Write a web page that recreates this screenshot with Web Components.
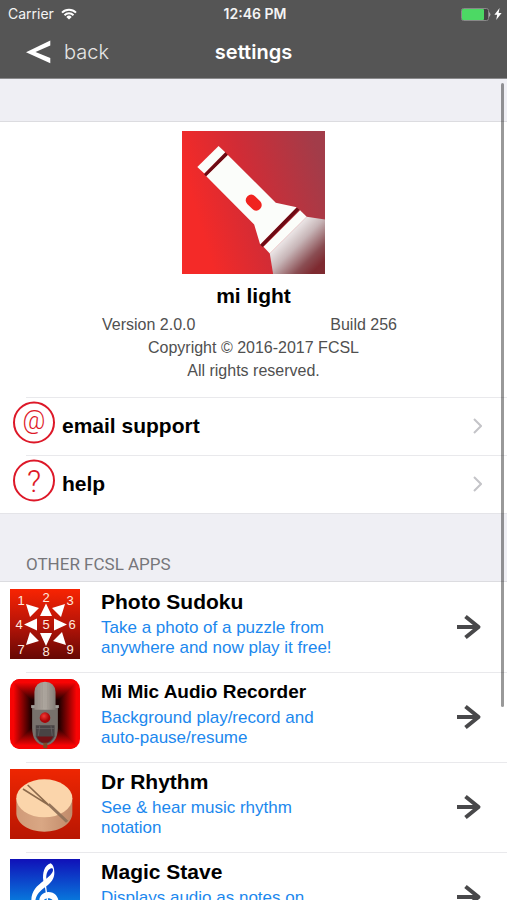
<!DOCTYPE html>
<html lang="en">
<head>
<meta charset="utf-8">
<meta name="viewport" content="width=device-width, initial-scale=1">
<title>settings</title>
<style>
    body {
        margin: 0;
        font-family: "Liberation Sans", Arial, sans-serif;
        --bar: #555555;
        --group: #efeff4;
        --line: #e9e9ec;
        --link: #1c88ee;
        --red: #dd1828;
    }
</style>
</head>
<body>

<settings-screen>
    <status-bar slot="top" carrier="Carrier" time="12:46 PM"></status-bar>
    <nav-bar slot="top" back="back">settings</nav-bar>

    <list-group>
        <about-card name="mi light" version="Version 2.0.0" build="Build 256">
            <app-art slot="art" kind="torch"></app-art>
            <div>Copyright © 2016-2017 FCSL</div>
            <div>All rights reserved.</div>
        </about-card>
        <link-row glyph="@">email support</link-row>
        <link-row glyph="?">help</link-row>
    </list-group>

    <list-group heading="OTHER FCSL APPS">
        <app-row name="Photo Sudoku">
            <app-art slot="art" kind="sudoku"></app-art>
            Take a photo of a puzzle from anywhere and now play it free!
        </app-row>
        <app-row name="Mi Mic Audio Recorder" long>
            <app-art slot="art" kind="mic"></app-art>
            Background play/record and auto-pause/resume
        </app-row>
        <app-row name="Dr Rhythm">
            <app-art slot="art" kind="drum"></app-art>
            See &amp; hear music rhythm notation
        </app-row>
        <app-row name="Magic Stave">
            <app-art slot="art" kind="clef"></app-art>
            Displays audio as notes on
        </app-row>
    </list-group>
</settings-screen>

<!-- Whole screen: bars on top, scrolling list below with an overlay scroll indicator -->
<template id="settings-screen-template">
    <style>
        :host {
            display: flex;
            flex-direction: column;
            height: 100vh;
            background: #fff;
        }
        .body {
            position: relative;
            flex: 1;
            min-height: 0;
        }
        main {
            height: 100%;
            overflow-y: auto;
            scrollbar-width: none;
        }
        .indicator {
            position: absolute;
            top: 4px;
            right: 3px;
            width: 3px;
            height: 76%;
            border-radius: 2px;
            background: rgba(0, 0, 0, 0.4);
        }
    </style>
    <header><slot name="top"></slot></header>
    <div class="body">
        <main><slot></slot></main>
        <div class="indicator"></div>
    </div>
</template>

<template id="status-bar-template">
    <style>
        :host {
            display: grid;
            grid-template-columns: 1fr auto 1fr;
            align-items: center;
            height: 28px;
            padding: 0 5px 0 8px;
            background: var(--bar);
            color: #f4f4f4;
            font: 14px/20px Inter, sans-serif;
        }
        .side {
            display: flex;
            align-items: center;
            gap: 7px;
        }
        .right {
            justify-content: flex-end;
            gap: 3px;
        }
        .time {
            font-weight: 600;
        }
        svg {
            display: block;
        }
    </style>
    <div class="side">
        <span class="carrier"></span>
        <svg width="16" height="12" viewBox="0 0 16 12" fill="none" stroke="#fff" stroke-width="2">
            <path d="M1 4.6a10 10 0 0 1 14 0M3.5 7.2a6.4 6.4 0 0 1 9 0"/>
            <path d="M8 11.6L5.3 8.9a3.8 3.8 0 0 1 5.4 0z" fill="#fff" stroke="none"/>
        </svg>
    </div>
    <span class="time"></span>
    <div class="side right">
        <svg width="30" height="13" viewBox="0 0 30 13">
            <rect x="0.5" y="0.5" width="27" height="12" rx="2" fill="#444" stroke="#888"/>
            <rect x="1" y="1" width="22" height="11" rx="1" fill="#4cd964"/>
            <path d="M28.4 4q1.8 2.500 0 5z" fill="#ddd"/>
        </svg>
        <svg width="8" height="12" viewBox="0 0 8 12" fill="#fff">
            <path d="M5.6 0L0.4 6.8h2.8L2.2 12l5.4-7H4.6z"/>
        </svg>
    </div>
</template>

<template id="nav-bar-template">
    <style>
        :host {
            display: grid;
            grid-template-columns: 1fr auto 1fr;
            align-items: center;
            height: 48px;
            padding: 0 26px 2px;
            background: var(--bar);
            border-bottom: 1px solid #8a8a8c;
            color: #fff;
            font-family: Inter, sans-serif;
        }
        button {
            display: flex;
            align-items: center;
            gap: 13px;
            padding: 0;
            border: 0;
            background: none;
            color: #e6e6e6;
            font: 300 20px/24px Inter, sans-serif;
        }
        h1 {
            margin: 0;
            font-size: 20px;
            line-height: 24px;
            font-weight: 600;
        }
    </style>
    <button type="button">
        <svg width="25" height="24" viewBox="0 0 25 24" fill="#fff">
            <path d="M24.3 0.500v5L9.500 12l14.8 6v5.2L0 12.2z"/>
        </svg>
        <span class="back"></span>
    </button>
    <h1><slot></slot></h1>
</template>

<template id="list-group-template">
    <style>
        :host {
            display: block;
            background: #fff;
        }
        h2 {
            display: flex;
            align-items: flex-end;
            box-sizing: border-box;
            height: 69px;
            margin: 0;
            padding: 0 26px 7px;
            background: var(--group);
            border-top: 1px solid #e4e4e8;
            border-bottom: 1px solid #dcdce0;
            color: #76767a;
            font: 400 17px/20px Roboto, sans-serif;
        }
        h2:empty {
            height: 43px;
            border-top: 0;
        }
    </style>
    <h2></h2>
    <slot></slot>
</template>

<template id="about-card-template">
    <style>
        :host {
            display: flex;
            flex-direction: column;
            align-items: center;
            padding: 9px 0 15px;
            color: #505050;
            font-size: 16px;
            line-height: 23px;
            text-align: center;
        }
        ::slotted(app-art) {
            width: 143px;
            height: 143px;
        }
        h2 {
            margin: 10px 0 5px;
            color: #000;
            font-size: 21px;
            line-height: 24px;
        }
        .release {
            display: flex;
            justify-content: space-between;
            align-self: stretch;
            padding: 0 110px 0 102px;
        }
    </style>
    <slot name="art"></slot>
    <h2></h2>
    <div class="release">
        <span class="version"></span>
        <span class="build"></span>
    </div>
    <slot></slot>
</template>

<template id="link-row-template">
    <style>
        :host {
            display: block;
        }
        a {
            display: flex;
            align-items: center;
            height: 58px;
            padding: 0 25px 0 13px;
            background: linear-gradient(var(--line), var(--line)) 26px 0 / 100% 1px no-repeat;
            color: #000;
            font-size: 21px;
            line-height: 24px;
            font-weight: bold;
            text-decoration: none;
        }
        .badge {
            align-self: flex-start;
            margin: 4px 7px 0 0;
        }
        .badge text {
            fill: var(--red);
            font-family: Roboto, sans-serif;
            font-weight: 300;
            text-anchor: middle;
        }
        .label {
            flex: 1;
        }
    </style>
    <a href="#">
        <svg class="badge" width="42" height="43" viewBox="0 0 42 43">
            <circle cx="21" cy="21.5" r="20" fill="none" stroke="#dd1828" stroke-width="2"/>
            <text x="21" y="30"></text>
        </svg>
        <span class="label"><slot></slot></span>
        <svg width="9" height="16" viewBox="0 0 9 16" fill="none" stroke="#c4c4c8" stroke-width="2">
            <path d="M1 1l7 7-7 7"/>
        </svg>
    </a>
</template>

<template id="app-row-template">
    <style>
        :host {
            display: block;
            --title: 21px;
        }
        :host([long]) {
            --title: 19px;
        }
        a {
            display: flex;
            box-sizing: border-box;
            min-height: 90px;
            padding: 7px 25px 7px 10px;
            color: var(--link);
            font-size: 17px;
            line-height: 20px;
            text-decoration: none;
        }
        :host(:not(:first-of-type)) a {
            background: linear-gradient(var(--line), var(--line)) 26px 0 / 100% 1px no-repeat;
        }
        ::slotted(app-art) {
            flex: none;
            width: 70px;
            height: 70px;
        }
        .text {
            flex: 1;
            padding: 1px 0 0 21px;
        }
        h3 {
            margin: 0 0 4px;
            color: #000;
            font-size: var(--title);
            line-height: 24px;
        }
        p {
            max-width: 240px;
            margin: 0;
        }
        .arrow {
            flex: none;
            align-self: center;
        }
    </style>
    <a href="#">
        <slot name="art"></slot>
        <div class="text">
            <h3></h3>
            <p><slot></slot></p>
        </div>
        <svg class="arrow" width="26" height="26" viewBox="0 0 26 26" fill="none" stroke="#48484a" stroke-width="4" stroke-linejoin="round">
            <path d="M1 13H22M9.500 2.500L22.500 13l-13 10.500"/>
        </svg>
    </a>
</template>

<template id="art-torch">
    <svg viewBox="36 34 430 430">
        <defs>
            <linearGradient id="bg" x1="0" y1="0.6" x2="1" y2="0.3">
                <stop offset="0.1" stop-color="#f42a28"/>
                <stop offset="0.5" stop-color="#d02c36"/>
                <stop offset="1" stop-color="#a23c49"/>
            </linearGradient>
            <linearGradient id="beam" gradientUnits="userSpaceOnUse" x1="350" y1="342" x2="448" y2="440">
                <stop offset="0" stop-color="#f2efef"/>
                <stop offset="0.35" stop-color="#c7b5b7"/>
                <stop offset="0.75" stop-color="#8a4d52"/>
                <stop offset="1" stop-color="#7e2a30"/>
            </linearGradient>
        </defs>
        <path fill="url(#bg)" d="M36 34h430v430H36z"/>
        <path fill="url(#beam)" d="M411 292l55 8v164H310l-10-62z"/>
        <path fill="#6d0b14" d="M166 98l8 8-65 65-7-8zM380 263l9 8-110 112-8-7z"/>
        <g fill="#fbfdfa">
            <path d="M146 79l20 19-63 64-21-20z"/>
            <path d="M174 106l144 144 63 13-110 112-18-60-144-145z"/>
            <path d="M391 272l20 20-111 110-19-20z"/>
        </g>
        <rect x="225" y="233" width="54" height="33" rx="16" fill="#f0231f" transform="rotate(45 252 249)"/>
    </svg>
</template>

<template id="art-sudoku">
    <svg viewBox="0 0 70 70">
        <defs>
            <linearGradient id="bg" x1="0" y1="0" x2="0" y2="1">
                <stop offset="0" stop-color="#f82402"/>
                <stop offset="0.5" stop-color="#b81408"/>
                <stop offset="1" stop-color="#660804"/>
            </linearGradient>
        </defs>
        <path fill="url(#bg)" d="M0 0h70v70H0z"/>
        <g fill="#fff">
            <path d="M36 14.500l6 12.500H30zM36 57l-6-13h12z"/>
            <path d="M14 35.500l13-6v12zM57 35.500l-13-6v12z"/>
            <path d="M16 15l13 4-9 9zM55 15l-13 4 9 9zM16 56l4-13 9 9zM56 56l-13-4 9-9z"/>
        </g>
        <g class="digits">
            <text x="11" y="16">1</text><text x="36" y="13">2</text><text x="60" y="16">3</text>
            <text x="9" y="40">4</text><text x="36" y="40">5</text><text x="62" y="40">6</text>
            <text x="11" y="65">7</text><text x="36" y="67">8</text><text x="60" y="65">9</text>
        </g>
    </svg>
</template>

<template id="art-mic">
    <svg viewBox="27 27 212 212">
        <defs>
            <linearGradient id="side" x1="0" y1="0" x2="1" y2="0">
                <stop offset="0.05" stop-color="#f80404"/>
                <stop offset="0.3" stop-color="#200000"/>
                <stop offset="0.7" stop-color="#200000"/>
                <stop offset="0.95" stop-color="#f80404"/>
            </linearGradient>
            <linearGradient id="top" gradientUnits="userSpaceOnUse" x1="0" y1="27" x2="0" y2="239">
                <stop offset="0.05" stop-color="#f80404"/>
                <stop offset="0.3" stop-color="#200000"/>
                <stop offset="0.7" stop-color="#200000"/>
                <stop offset="0.95" stop-color="#f80404"/>
            </linearGradient>
            <linearGradient id="metal" x1="0" y1="0" x2="1" y2="0">
                <stop offset="0" stop-color="#938b84"/>
                <stop offset="0.5" stop-color="#b0a9a1"/>
                <stop offset="1" stop-color="#827b75"/>
            </linearGradient>
            <radialGradient id="knob" cx="0.4" cy="0.35">
                <stop offset="0" stop-color="#f43a34"/>
                <stop offset="1" stop-color="#a90406"/>
            </radialGradient>
            <clipPath id="round"><rect x="27" y="27" width="212" height="212" rx="30"/></clipPath>
        </defs>
        <g clip-path="url(#round)">
            <path fill="url(#side)" d="M27 27h212v212H27z"/>
            <path fill="url(#top)" d="M27 27h212L133 133zM27 239h212L133 133z"/>
        </g>
        <path fill="#a09c97" d="M91 106h84v9H91z"/>
        <path fill="#77716c" d="M94 115h78v59q0 50-39 55-39-5-39-55z"/>
        <path fill="url(#metal)" d="M101 120V66q2-30 32-31 30 1 32 31v54z"/>
        <path stroke="#968f88" stroke-width="1" d="M109 54v62M117 44v72M125 39v77M133 38v78M141 39v77M149 44v72M157 54v62"/>
        <path fill="#484344" d="M105 167h57v34q-9 20-29 22-20-2-28-22z"/>
        <path stroke="#6c6868" stroke-width="2" fill="none" d="M107 177h54M117 169l-4 30M151 169l4 30"/>
        <path fill="#711014" d="M108 201h50q-9 19-25 20-18-1-25-20z"/>
        <circle cx="133" cy="144" r="16" fill="url(#knob)"/>
        <path fill="#7c4926" d="M128 220h12v17h-12z"/>
    </svg>
</template>

<template id="art-drum">
    <svg viewBox="29 29 210 210">
        <defs>
            <linearGradient id="bg" x1="0" y1="0" x2="0" y2="1">
                <stop offset="0" stop-color="#ee2602"/>
                <stop offset="1" stop-color="#b81602"/>
            </linearGradient>
            <linearGradient id="shell" x1="0" y1="0" x2="1" y2="0">
                <stop offset="0" stop-color="#d09a78"/>
                <stop offset="0.45" stop-color="#d9a784"/>
                <stop offset="1" stop-color="#c08a6a"/>
            </linearGradient>
        </defs>
        <path fill="url(#bg)" d="M29 29h210v210H29z"/>
        <path fill="url(#shell)" d="M48 116v45c0 31 37 56 84 56s84-25 84-56v-45z"/>
        <ellipse cx="132" cy="117" rx="84" ry="57" fill="#fbd5ab"/>
        <path fill="none" stroke="#8c6a4c" stroke-width="5" d="M82 77l64 61M68 89l78 49"/>
        <path fill="#94745b" d="M141 137l7-5 56 52-7 6z"/>
    </svg>
</template>

<template id="art-clef">
    <svg viewBox="29 301 210 210">
        <defs>
            <linearGradient id="bg" x1="0" y1="0" x2="0" y2="1">
                <stop offset="0" stop-color="#1010b8"/>
                <stop offset="0.6" stop-color="#0878dc"/>
                <stop offset="1" stop-color="#10a8ee"/>
            </linearGradient>
        </defs>
        <path fill="url(#bg)" d="M29 301h210v210H29z"/>
        <path fill="#fff" d="M151 314c8 4 11 17 11 28 0 18-10 30-24 41-16 12-33 25-33 47 0 18 13 29 31 29 15 0 26-9 26-21 0-11-8-19-19-19-10 0-16 7-16 15 0 5 3 10 6 13-10-3-16-10-16-21 0-15 12-26 27-26 19 0 31 14 31 32 0 22-17 36-40 36-25 0-42-18-42-43 0-29 18-44 36-58-3-25 3-47 22-53zm1 15c-10 4-15 17-14 31 12-9 20-19 20-26 0-4-2-6-6-5z"/>
        <path fill="none" stroke="#fff" stroke-width="4" d="M133 366l16 112q2 17-14 18"/>
    </svg>
</template>

<script>
    // Clones <template id="{tag}-template"> into an open shadow root
    class TemplateElement extends HTMLElement {
        constructor() {
            super();
            var template = document.querySelector("#" + this.localName + "-template");
            this.attachShadow({mode: "open"}).appendChild(template.content.cloneNode(true));
        }

        fill(selector, attribute) {
            this.shadowRoot.querySelector(selector).textContent = this.getAttribute(attribute) || "";
        }
    }

    class SettingsScreen extends TemplateElement {}

    class StatusBar extends TemplateElement {
        connectedCallback() {
            this.fill(".carrier", "carrier");
            this.fill(".time", "time");
        }
    }

    class NavBar extends TemplateElement {
        connectedCallback() {
            this.fill(".back", "back");
        }
    }

    class ListGroup extends TemplateElement {
        connectedCallback() {
            this.fill("h2", "heading");
        }
    }

    class AboutCard extends TemplateElement {
        connectedCallback() {
            this.fill("h2", "name");
            this.fill(".version", "version");
            this.fill(".build", "build");
        }
    }

    class LinkRow extends TemplateElement {
        connectedCallback() {
            this.fill(".badge text", "glyph");
            // "@" hangs below the baseline, so it is set smaller and higher
            var text = this.shadowRoot.querySelector(".badge text");
            var at = this.getAttribute("glyph") == "@";
            text.setAttribute("font-size", at ? "25" : "31");
            text.setAttribute("y", at ? "28" : "33");
        }
    }

    class AppRow extends TemplateElement {
        connectedCallback() {
            this.fill("h3", "name");
        }
    }

    // Square artwork, picked by the kind attribute
    class AppArt extends HTMLElement {
        connectedCallback() {
            if (this.shadowRoot) {
                return;
            }
            var shadow = this.attachShadow({mode: "open"});
            shadow.innerHTML = `
                <style>
                    :host { display: block; }
                    svg { display: block; width: 100%; height: 100%; }
                    .digits { fill: #ffe9df; font-size: 13px; line-height: 13px; text-anchor: middle; }
                </style>`;
            var art = document.querySelector("#art-" + this.getAttribute("kind"));
            shadow.appendChild(art.content.cloneNode(true));
        }
    }

    customElements.define("settings-screen", SettingsScreen);
    customElements.define("status-bar", StatusBar);
    customElements.define("nav-bar", NavBar);
    customElements.define("list-group", ListGroup);
    customElements.define("about-card", AboutCard);
    customElements.define("link-row", LinkRow);
    customElements.define("app-row", AppRow);
    customElements.define("app-art", AppArt);
</script>
</body>
</html>
